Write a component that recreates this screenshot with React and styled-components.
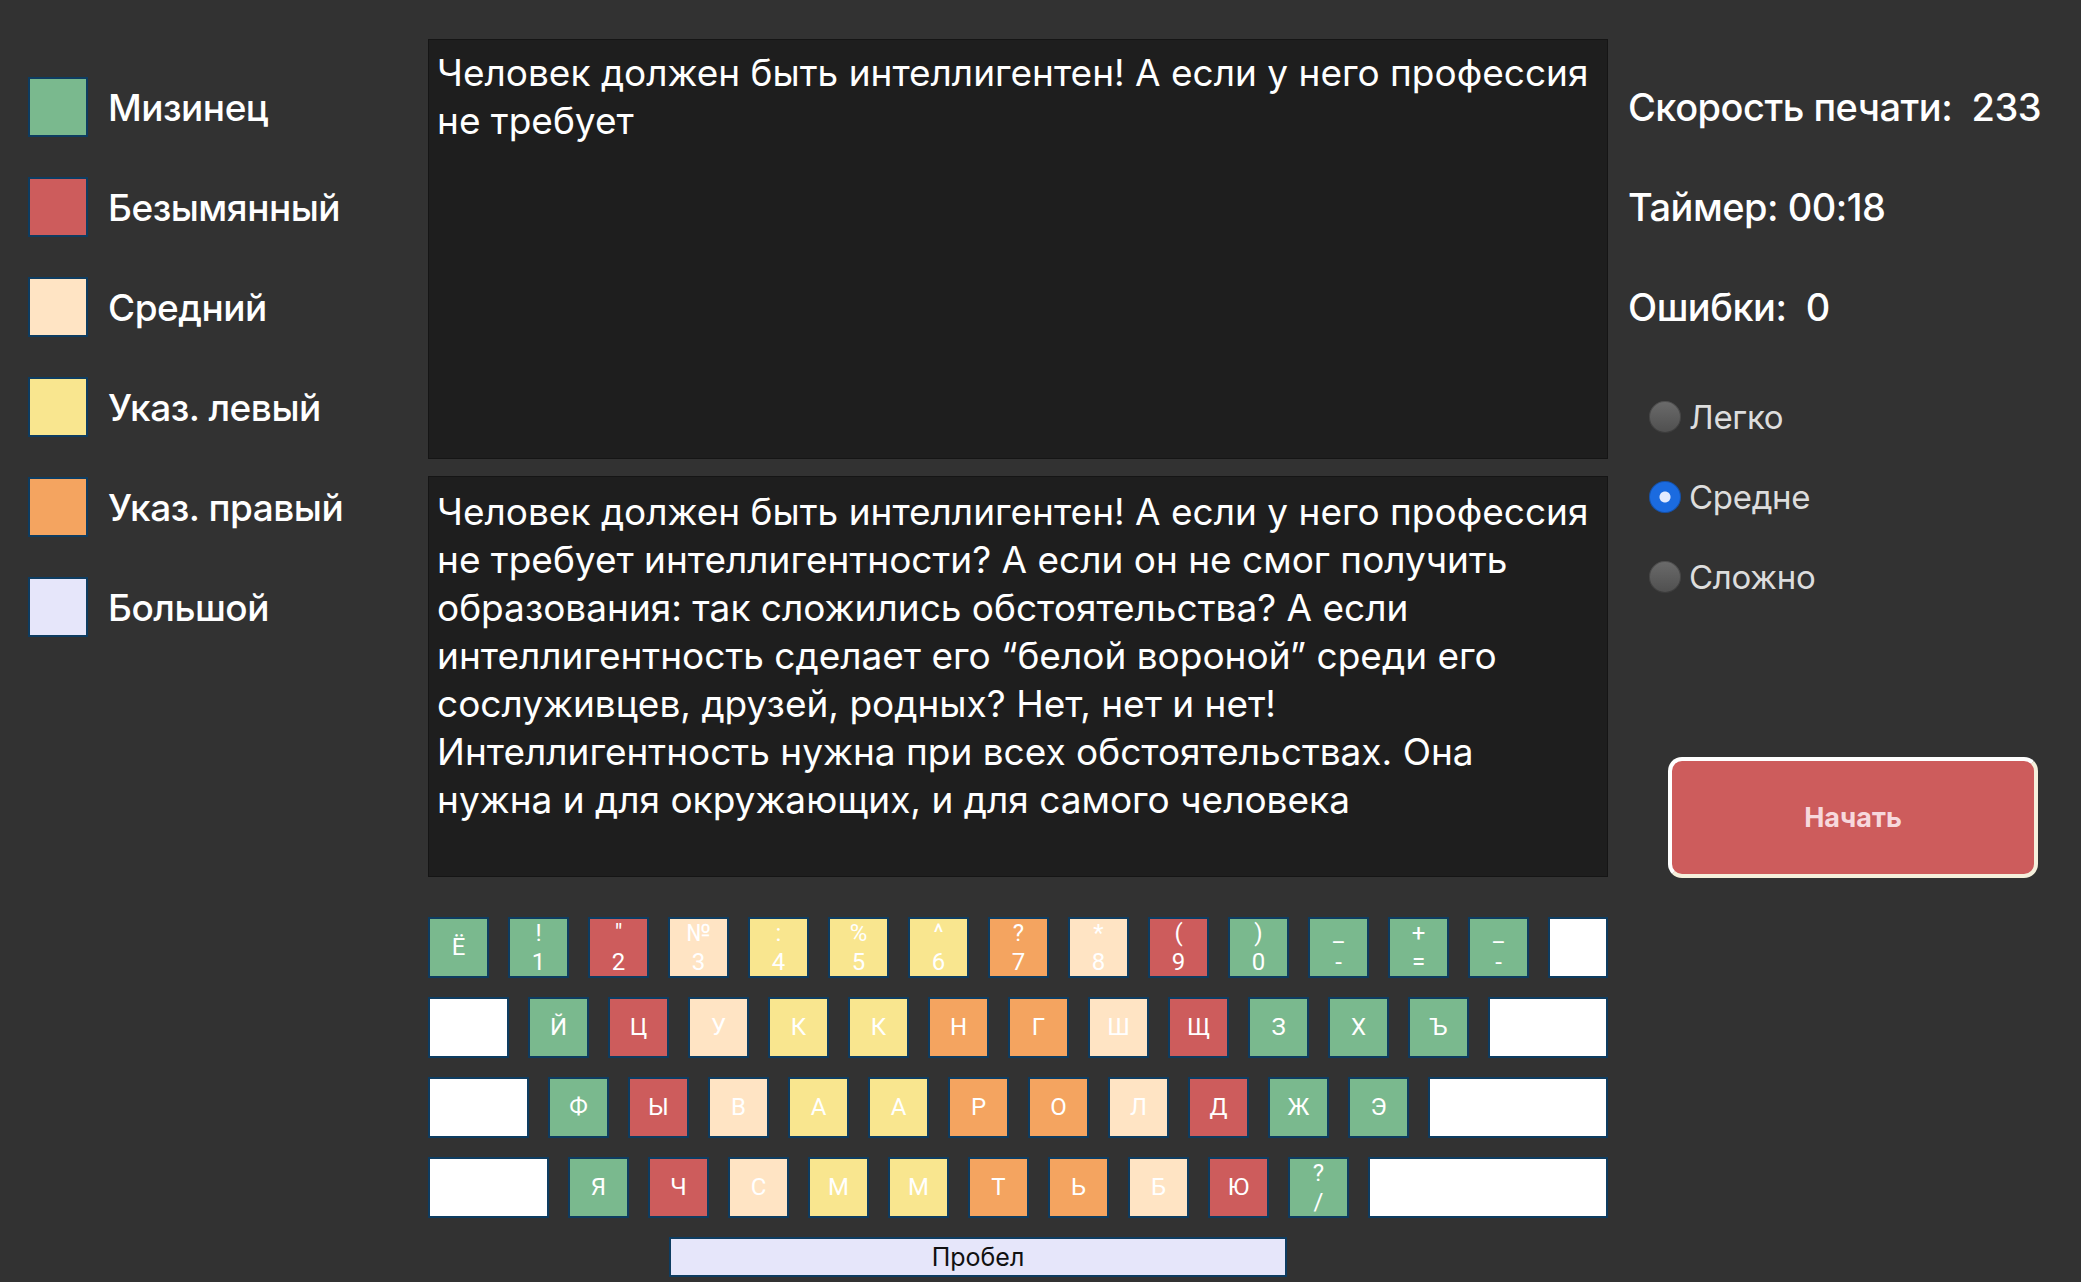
import React from 'react'
import styled, { createGlobalStyle } from 'styled-components'

const GlobalStyle = createGlobalStyle`
    body {
        margin: 0;
        background: #323232;
        font-family: Inter, "Noto Sans", sans-serif;
    }
`

const COLORS = {
    pinky: '#7ab98e',
    ring: '#cd5c5c',
    middle: '#ffe4c4',
    indexL: '#f9e68f',
    indexR: '#f4a460',
    thumb: '#e6e6fa'
}

const legend = [
    { color: COLORS.pinky, label: 'Мизинец' },
    { color: COLORS.ring, label: 'Безымянный' },
    { color: COLORS.middle, label: 'Средний' },
    { color: COLORS.indexL, label: 'Указ. левый' },
    { color: COLORS.indexR, label: 'Указ. правый' },
    { color: COLORS.thumb, label: 'Большой' }
]

const { pinky: P, ring: R, middle: M, indexL: L, indexR: I } = COLORS

const rows = [
    {
        lead: null,
        keys: [
            ['Ё', null, P], ['!', '1', P], ['"', '2', R], ['№', '3', M], [':', '4', L],
            ['%', '5', L], ['^', '6', L], ['?', '7', I], ['*', '8', M], ['(', '9', R],
            [')', '0', P], ['_', '-', P], ['+', '=', P], ['_', '-', P]
        ]
    },
    {
        lead: 81,
        keys: [
            ['Й', null, P], ['Ц', null, R], ['У', null, M], ['К', null, L], ['К', null, L],
            ['Н', null, I], ['Г', null, I], ['Ш', null, M], ['Щ', null, R], ['З', null, P],
            ['Х', null, P], ['Ъ', null, P]
        ]
    },
    {
        lead: 101,
        keys: [
            ['Ф', null, P], ['Ы', null, R], ['В', null, M], ['А', null, L], ['А', null, L],
            ['Р', null, I], ['О', null, I], ['Л', null, M], ['Д', null, R], ['Ж', null, P],
            ['Э', null, P]
        ]
    },
    {
        lead: 121,
        keys: [
            ['Я', null, P], ['Ч', null, R], ['С', null, M], ['М', null, L], ['М', null, L],
            ['Т', null, I], ['Ь', null, I], ['Б', null, M], ['Ю', null, R], ['?', '/', P]
        ]
    }
]

const typed = 'Человек должен быть интеллигентен! А если у него профессия не требует'

const source = 'Человек должен быть интеллигентен! А если у него профессия не требует интеллигентности? А если он не смог получить образования: так сложились обстоятельства? А если интеллигентность сделает его “белой вороной” среди его сослуживцев, друзей, родных? Нет, нет и нет! Интеллигентность нужна при всех обстоятельствах. Она нужна и для окружающих, и для самого человека'

const levels = [
    { label: 'Легко', checked: false },
    { label: 'Средне', checked: true },
    { label: 'Сложно', checked: false }
]

export default function App() {
    return (
        <>
            <GlobalStyle />
            <Page>
                <Legend>
                    {legend.map(item => (
                        <LegendItem key={item.label}>
                            <Swatch color={item.color} />
                            <LegendLabel>{item.label}</LegendLabel>
                        </LegendItem>
                    ))}
                </Legend>

                <Main>
                    <TextPanel height={420} padTop={9}>{typed}</TextPanel>
                    <TextPanel height={401} padTop={11} gap={17}>{source}</TextPanel>

                    <Keyboard>
                        {rows.map((row, i) => (
                            <KeyRow key={i}>
                                {row.lead && <BlankKey width={row.lead} />}
                                {row.keys.map(([top, bottom, color], j) => (
                                    <Key key={j} color={color}>
                                        <span>{top}</span>
                                        {bottom && <span>{bottom}</span>}
                                    </Key>
                                ))}
                                <BlankKey grow />
                            </KeyRow>
                        ))}
                        <SpaceBar>Пробел</SpaceBar>
                    </Keyboard>
                </Main>

                <Side>
                    <Stats>
                        <Stat>{'Скорость печати:  233'}</Stat>
                        <Stat>{'Таймер: 00:18'}</Stat>
                        <Stat>{'Ошибки:  0'}</Stat>
                    </Stats>

                    <Levels>
                        {levels.map(l => (
                            <Level key={l.label}>
                                <Radio checked={l.checked} />
                                {l.label}
                            </Level>
                        ))}
                    </Levels>

                    <StartButton>Начать</StartButton>
                </Side>
            </Page>
        </>
    )
}




const Page = styled.div`
    display: flex;
    height: 1282px;
    overflow: hidden;
`

const Legend = styled.div`
    width: 428px;
    flex-shrink: 0;
    box-sizing: border-box;
    padding: 77px 0 0 28px;
    display: flex;
    flex-direction: column;
    gap: 40px;
`

const LegendItem = styled.div`
    display: flex;
    align-items: center;
    gap: 20px;
    height: 60px;
`

const Swatch = styled.div`
    width: 60px;
    height: 60px;
    box-sizing: border-box;
    border: 2px solid #0e3c60;
    background: ${p => p.color};
`

const LegendLabel = styled.span`
    color: #fff;
    font-size: 37px;
    font-weight: 500;
    letter-spacing: -0.5px;
`

const Main = styled.div`
    width: 1180px;
    flex-shrink: 0;
    padding-top: 39px;
`

const TextPanel = styled.div`
    height: ${p => p.height}px;
    margin-top: ${p => p.gap || 0}px;
    box-sizing: border-box;
    background: #1e1e1e;
    border: 1px solid #151515;
    padding: ${p => p.padTop}px 8px 0;
    color: #fff;
    font-size: 37px;
    line-height: 48px;
`

const Keyboard = styled.div`
    margin-top: 40px;
    display: flex;
    flex-direction: column;
    gap: 19px;
`

const KeyRow = styled.div`
    display: flex;
    gap: 19px;
`

const KeyBase = styled.div`
    height: 61px;
    box-sizing: border-box;
    border: 2px solid #0e3c60;
`

const Key = styled(KeyBase)`
    width: 61px;
    background: ${p => p.color};
    color: #fff;
    display: flex;
    flex-direction: column;
    align-items: center;
    justify-content: center;
    font-family: Roboto, sans-serif;
    font-size: 24px;
    line-height: 29px;
`

const BlankKey = styled(KeyBase)`
    background: #fff;
    width: ${p => p.width ? `${p.width}px` : 'auto'};
    flex: ${p => p.grow ? 1 : 'none'};
`

const SpaceBar = styled.div`
    margin-left: 241px;
    width: 618px;
    height: 40px;
    box-sizing: border-box;
    border: 2px solid #0e3c60;
    background: #e6e6fa;
    color: #111;
    font-size: 25px;
    display: flex;
    align-items: center;
    justify-content: center;
`

const Side = styled.div`
    flex: 1;
    padding: 77px 0 0 20px;
    color: #fff;
`

const Stats = styled.div`
    display: flex;
    flex-direction: column;
    gap: 40px;
`

const Stat = styled.div`
    height: 60px;
    display: flex;
    align-items: center;
    white-space: pre;
    font-size: 38px;
    font-weight: 500;
    letter-spacing: -0.5px;
`

const Levels = styled.div`
    margin: 64px 0 0 21px;
    display: flex;
    flex-direction: column;
    gap: 48px;
`

const Level = styled.label`
    display: flex;
    align-items: center;
    gap: 8px;
    height: 32px;
    color: #ddd;
    font-size: 33px;
    letter-spacing: -0.3px;
`

const Radio = styled.span`
    flex-shrink: 0;
    width: 32px;
    height: 32px;
    border-radius: 50%;
    box-sizing: border-box;
    background: ${p => p.checked
        ? 'radial-gradient(circle, #e3ebff 0 5px, #1b6be0 6px)'
        : 'linear-gradient(#6b6b6b, #4f4f4f)'};
    box-shadow: inset 0 0 0 1px rgba(0, 0, 0, 0.25);
`

const StartButton = styled.button`
    display: block;
    margin: 164px 0 0 40px;
    width: 370px;
    height: 121px;
    box-sizing: border-box;
    border: 4px solid;
    border-color: #fff #f5f0dc #f5f0dc #fff;
    border-radius: 14px;
    background: #cd5c5c;
    color: #f7d8dc;
    font-family: Inter, sans-serif;
    font-size: 27px;
    font-weight: 700;
    cursor: pointer;
`
